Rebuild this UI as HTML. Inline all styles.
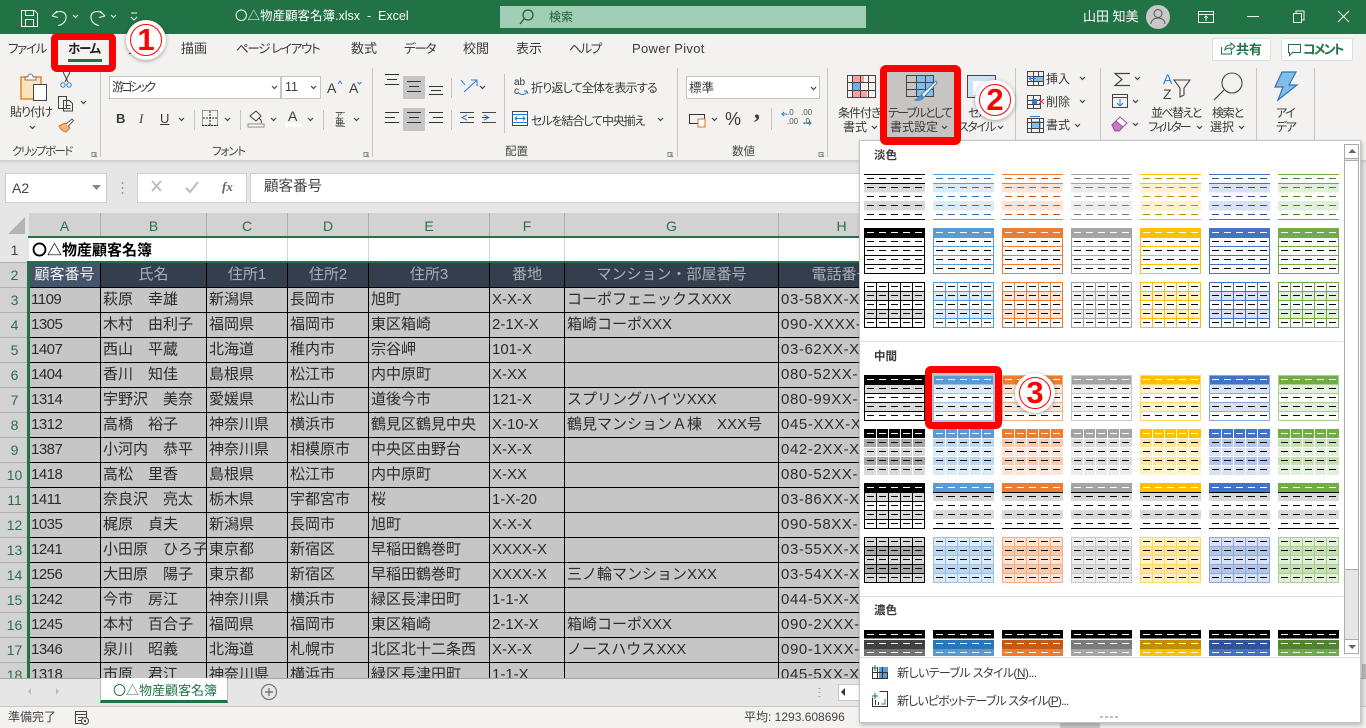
<!DOCTYPE html>
<html lang="ja"><head><meta charset="utf-8"><title>Excel</title>
<style>
html,body{margin:0;padding:0;width:1366px;height:728px;overflow:hidden;background:#e6e6e6}
body{position:relative;font-family:"Liberation Sans","Noto Sans CJK JP",sans-serif;font-size:12px;color:#3b3a39;font-feature-settings:"palt"}
div,span{position:absolute;box-sizing:border-box}
.t{white-space:nowrap;line-height:16px}
u{text-decoration:underline}
.box{background:#fff;border:1px solid #c8c6c4}
svg{position:absolute;left:0;top:0;overflow:hidden}
.i{fill:none;stroke:#444;stroke-width:1;shape-rendering:crispEdges}
.r{fill:none;stroke:#444;stroke-width:1.2}
.lab{color:#484644;font-size:11.5px}
.tab{font-size:13px}
.kt{font-size:12.5px;letter-spacing:-1.3px}
#grid{left:0;top:213px;width:860px;height:465px;overflow:hidden}
table{border-collapse:separate;border-spacing:0;table-layout:fixed;width:905px;position:absolute;left:0;top:0;font-feature-settings:normal;font-size:15px}
td,th{box-sizing:border-box;height:25px;padding:0 0 0 2px;white-space:nowrap;overflow:hidden;font-weight:400;line-height:24px;color:#2b2b2b;background:#c6c6c6;border-right:1px solid #000;border-bottom:1px solid #000;text-align:left}
td.n{letter-spacing:-.5px;padding-left:2px}
tr:not(.b) td:nth-child(9){letter-spacing:.6px}
th{text-align:center;padding:0}
tr.h th{background:#d2d2d2;color:#2c6e4c;border-right:1px solid #aeaeae;border-bottom:0;font-size:14px;font-family:"Liberation Sans",sans-serif}
tr.h th.c{background:#e6e6e6;border-right:0}
th.rh{background:#d2d2d2;color:#2c6e4c;border-right:0;border-bottom:1px solid #aeaeae;font-size:14px;padding:0;font-family:"Liberation Sans",sans-serif}
th.w{background:#e6e6e6;color:#444}
tr.a td{background:#fff;border-right:1px solid #d4d4d4;border-bottom:0;font-weight:700;color:#000;overflow:visible}
tr.a td.f{border-right:0;padding-left:3px}
tr.b td{background:#333f4f;color:#aab0b8;text-align:center;padding:0}
tr.b td.on{background:#44546a;color:#f2f2f2}
.k{--c:#000;--h:#000;--l:#d9d9d9;--m:#a6a6a6;--t:#000;--dd:#404040;--dc:#737373}
.b{--c:#5b9bd5;--h:#2e75b6;--l:#ddebf7;--m:#bdd7ee;--t:#9bc2e6;--dd:#2e75b6;--dc:#5b9bd5}
.o{--c:#ed7d31;--h:#c65911;--l:#fce4d6;--m:#f8cbad;--t:#f4b084;--dd:#c65911;--dc:#ed7d31}
.g{--c:#a5a5a5;--h:#7b7b7b;--l:#ededed;--m:#dbdbdb;--t:#c9c9c9;--dd:#7b7b7b;--dc:#a5a5a5}
.y{--c:#ffc000;--h:#bf8f00;--l:#fff2cc;--m:#ffe699;--t:#ffd966;--dd:#bf8f00;--dc:#ffc000}
.n{--c:#4472c4;--h:#305496;--l:#d9e1f2;--m:#b4c6e7;--t:#8ea9db;--dd:#305496;--dc:#4472c4}
.e{--c:#70ad47;--h:#548235;--l:#e2efda;--m:#c6e0b4;--t:#a9d08e;--dd:#548235;--dc:#70ad47}
.fc{fill:var(--c)}.fl{fill:var(--l)}.fm{fill:var(--m)}.fd{fill:var(--dd)}.fe{fill:var(--dc)}
.sc{stroke:var(--c);fill:none}.st{stroke:var(--t);fill:none}.sh{stroke:var(--h)}
.red{border:7px solid #f00;border-radius:6px}
.num{width:40px;height:40px;border-radius:50%;background:#fff;box-shadow:0 1px 4px rgba(0,0,0,.35)}
.num i{position:absolute;left:4px;top:4px;width:32px;height:32px;border:1.5px solid #f00;border-radius:50%;box-sizing:border-box}
.num b{position:absolute;left:0;top:0;width:40px;text-align:center;line-height:40px;font-size:31px;color:#f00;font-family:"Liberation Sans",sans-serif}
</style></head><body>

<!-- title bar -->
<div style="left:0;top:0;width:1366px;height:34px;background:#217346"></div>
<div style="left:500px;top:6px;width:366px;height:22px;background:#a0cdb3"></div>
<span class="t" style="left:549px;top:9px;color:#1d5f3b;font-size:12px">検索</span>
<span class="t" style="left:235px;top:8px;color:#fff;font-size:12.5px;font-feature-settings:normal">〇△物産顧客名簿.xlsx &nbsp;- &nbsp;Excel</span>
<span class="t" style="left:1083px;top:9px;color:#fff;font-size:13px">山田 知美</span>
<svg width="1366" height="34" viewBox="0 0 1366 34">
<g fill="none" stroke="#eef5f1" stroke-width="1.1">
<path d="M21.5 10.5h13l3 3v13h-16zM25.5 10.5v5h8v-5M25.5 26.5v-7h8v7" shape-rendering="crispEdges"/>
<path d="M52 16l5-5M52 16l6 1.5M52.5 15.5C58 9 67 11 66 18c-.5 4-4 7-8 7.5"/>
<path d="M105 16l-5-5M105 16l-6 1.5M104.5 15.5C99 9 90 11 91 18c.5 4 4 7 8 7.5"/>
<path d="M73 15l2.500 2.500L78 15M111 15l2.500 2.500L116 15M131 13h6M131 17l3 3 3-3"/>
<path d="M1198.500 11.500h15v11h-15zM1198.500 14.500h15M1206 21v-4M1204 18l2-2 2 2" shape-rendering="crispEdges"/>
<path d="M1247 16.500h12M1293.500 13.500h8v9h-8zM1296 13.500v-2.500h8v9h-2.500" shape-rendering="crispEdges"/>
<path d="M1338 11l11 11M1349 11l-11 11"/>
</g>
<circle cx="528" cy="15" r="5" fill="none" stroke="#1d5f3b" stroke-width="1.2"/><path d="M524 19l-4 5" stroke="#1d5f3b" stroke-width="1.2"/>
<circle cx="1158" cy="17" r="12" fill="#c8c8c8"/><circle cx="1158" cy="13.500" r="4" fill="none" stroke="#555"/><path d="M1151 24c0-8 14-8 14 0" fill="none" stroke="#555"/>
</svg>

<!-- ribbon -->
<div style="left:0;top:34px;width:1366px;height:126px;background:#f3f2f1"></div>
<div style="left:0;top:160px;width:1366px;height:4px;background:linear-gradient(#cfcfcf,#e6e6e6)"></div>
<span class="t tab kt" style="left:8px;top:41px">ファイル</span>
<span class="t tab kt" style="left:68px;top:41px;font-weight:700;color:#222">ホーム</span>
<div style="left:68px;top:59px;width:34px;height:3px;background:#217346"></div>
<span class="t tab" style="left:128px;top:41px">挿入</span>
<span class="t tab" style="left:181px;top:41px">描画</span>
<span class="t tab kt" style="left:236px;top:41px">ページ レイアウト</span>
<span class="t tab" style="left:351px;top:41px">数式</span>
<span class="t tab kt" style="left:404px;top:41px">データ</span>
<span class="t tab" style="left:463px;top:41px">校閲</span>
<span class="t tab" style="left:516px;top:41px">表示</span>
<span class="t tab kt" style="left:569px;top:41px">ヘルプ</span>
<span class="t tab" style="left:632px;top:41px;letter-spacing:.3px">Power Pivot</span>
<div style="left:1212px;top:38px;width:59px;height:23px;background:#fff;border:1px solid #e1dfdd;border-radius:2px"></div>
<span class="t" style="left:1236px;top:42px;font-size:13px;font-weight:700;color:#217346">共有</span>
<div style="left:1281px;top:38px;width:72px;height:23px;background:#fff;border:1px solid #e1dfdd;border-radius:2px"></div>
<span class="t" style="left:1303px;top:42px;font-size:13px;font-weight:700;color:#217346;letter-spacing:-1.9px">コメント</span>

<!-- ribbon boxes -->
<div class="box" style="left:109px;top:76px;width:172px;height:23px"></div>
<div class="box" style="left:281px;top:76px;width:40px;height:23px"></div>
<div class="box" style="left:686px;top:76px;width:134px;height:23px"></div>
<div style="left:403px;top:76px;width:22px;height:23px;background:#c6c6c6"></div>
<div style="left:403px;top:108px;width:22px;height:23px;background:#c6c6c6"></div>

<svg width="1366" height="160" viewBox="0 0 1366 160">
<!-- separators -->
<path d="M100.500 68v89M372.500 68v89M677.500 68v89M827.500 68v89M1015.500 68v89M1100.500 68v89M1256.500 68v89M1314.500 68v89M194.500 110v20M240.500 110v20M323.500 110v20M504.500 74v59M771.500 108v22M451.500 78v20M451.500 110v20" stroke="#c8c6c4" fill="none" shape-rendering="crispEdges"/>
<!-- share / comment -->
<path d="M1221.500 47v7h10v-3M1225 50c0-4 3-5 6-5v-2l4 3.500-4 3.500v-2c-3 0-5 1-6 2z" fill="none" stroke="#217346"/>
<path d="M1288.500 44.500h12v8h-8l-3 3v-3h-1z" fill="none" stroke="#217346"/>
<!-- clipboard -->
<rect x="21" y="77" width="20" height="22" fill="#fbe3c0" stroke="#e08a1e" stroke-width="1.500"/>
<path d="M25 80v-3h3c0-4 5-4 5 0h3v3z" fill="#fff" stroke="#777"/>
<rect x="33.500" y="84.500" width="13" height="16" fill="#fff" stroke="#444"/>
<path d="M63 72l5 10M70 72l-5 10" stroke="#444" fill="none"/>
<circle cx="63" cy="85" r="2.200" fill="none" stroke="#2b7cd3"/><circle cx="69" cy="85" r="2.200" fill="none" stroke="#2b7cd3"/>
<path class="i" d="M58.500 96.500h8v12h-8zM63.500 100.500h6l3 3v7.500h-9zM65.500 105.500h5M65.500 108.500h5"/>
<path d="M59 126l6-3 5 5-4 4c-2 0-6-3-7-6z" fill="#f4b183" stroke="#d9761e"/><path d="M66 124l6-5 1.500 1.500-5.500 6" fill="#fff" stroke="#555"/>
<!-- chevrons -->
<path class="r" d="M81 101l2.500 2.500 2.500-2.500M30 126l2.500 2.500 2.500-2.500M272 86l2.500 2.500 2.500-2.500M311 86l2.500 2.500 2.500-2.500M179 118l2.500 2.500 2.500-2.500M225 118l2.500 2.500 2.500-2.500M271 118l2.500 2.500 2.500-2.500M308 118l2.500 2.500 2.500-2.500M354 118l2.500 2.500 2.500-2.500M480 86l2.500 2.500 2.500-2.500M658 118l2.500 2.500 2.500-2.500M811 87l2.500 2.500 2.500-2.500M712 118l2.500 2.500 2.500-2.500M1080 77l2.500 2.500 2.500-2.500M1080 100l2.500 2.500 2.500-2.500M1075 124l2.500 2.500 2.500-2.500M1135 77l2.500 2.500 2.500-2.500M1133 100l2.500 2.500 2.500-2.500M1133 123l2.500 2.500 2.500-2.500M872 126l2.500 2.500 2.500-2.500M998 126l2.500 2.500 2.500-2.500M1197 126l2.500 2.500 2.500-2.500M1239 126l2.500 2.500 2.500-2.500"/>
<!-- font row -->
<path d="M338 84l2-3 2 3" stroke="#2b7cd3" fill="none"/>
<path d="M357.500 82l2 2 2-2" stroke="#2b7cd3" fill="none"/>
<path class="i" d="M202.500 110.500h15v15h-15z" stroke-dasharray="1 1"/><path class="i" d="M202 125.500h16M210 111v14M203 118h14" style="stroke:#222" stroke-dasharray="2 1"/>
<path d="M250 116l6-5 5 5-5 5zM259 118c2 2 3 3 2 5" fill="none" stroke="#444"/><rect x="248" y="124" width="16" height="3" fill="#fff" stroke="#888"/>
<rect x="285" y="123" width="16" height="4" fill="#fff"/>
<path class="i" d="M336 123.500h9M336 126.500h9M336 112.500h9" style="stroke:#888"/>
<!-- align -->
<path class="i" d="M385 74.500h14M387 79.500h10M385 84.500h14M407 81.500h14M409 86.500h10M407 91.500h14M429 86.500h14M431 90.500h10M429 94.500h14M385 112.500h14M385 117.500h10M385 122.500h14M407 112.500h14M409 117.500h10M407 122.500h14M429 112.500h14M433 117.500h10M429 122.500h14" style="stroke:#333"/>
<path d="M461 80l4 5M471 80l6 0 0 6M464 92l13-12" fill="none" stroke="#2b7cd3"/>
<path class="i" d="M460 112.500h14M468 117.500h6M460 122.500h14M482 112.500h14M482 117.500h6M482 122.500h14"/>
<path d="M467 115l-5 2.500 5 2.500M484 115l5 2.500-5 2.500" fill="none" stroke="#2b7cd3"/>
<path d="M518 92c3 4 8 3 9-1M527 91l-3 0M527 91l1 3" fill="none" stroke="#2b7cd3"/>
<rect x="512.500" y="111.500" width="15" height="14" fill="#fff" stroke="#444"/><path d="M512 114.500h16M512 122.500h16" stroke="#2b7cd3" fill="none"/><path d="M515 118.500h10M517 116.500l-2 2 2 2M523 116.500l2 2-2 2" stroke="#2b7cd3" fill="none"/>
<!-- number -->
<rect x="689.500" y="114.500" width="15" height="9" fill="none" stroke="#333"/><rect x="698" y="119" width="7" height="8" fill="#fff" stroke="#e2711d"/>
<path d="M782 114h5M784 112l-2 2 2 2M803 123h8M809 121l2 2-2 2" fill="none" stroke="#2b7cd3"/>
<!-- conditional -->
<rect x="852" y="75" width="12" height="7" fill="#f6a0a4"/><rect x="852" y="90" width="15" height="7" fill="#f6a0a4"/><rect x="852" y="82" width="8" height="8" fill="#6fb0e6"/>
<path class="i" d="M847.500 75.500h28v22h-28zM847.500 82.500h28M847.500 90.500h28M852.500 75v22M860.500 75v22M868.500 75v22"/>
</svg>

<!-- ribbon text -->
<span class="t" style="left:10px;top:104px;letter-spacing:-1px">貼り付け</span>
<span class="t lab" style="left:12px;top:144px;letter-spacing:-1.6px">クリップボード</span>
<span class="t" style="left:112px;top:79px;letter-spacing:-2.6px">游ゴシック</span>
<span class="t" style="left:285px;top:79px;font-size:12.5px">11</span>
<span class="t" style="left:327px;top:80px;font-size:14px">A</span><span class="t" style="left:349px;top:80px;font-size:14px">A</span>
<span class="t" style="left:116px;top:111px;font-weight:700;font-size:13px;font-family:'Liberation Sans',sans-serif">B</span>
<span class="t" style="left:139px;top:111px;font-style:italic;font-size:13px;font-family:'Liberation Serif',serif">I</span>
<span class="t" style="left:160px;top:111px;text-decoration:underline;font-size:13px">U</span>
<span class="t" style="left:288px;top:108px;font-size:14px">A</span>
<span class="t" style="left:335px;top:108px;font-size:8px">ア</span><span class="t" style="left:335px;top:114px;font-size:9px">亜</span>
<span class="t lab" style="left:212px;top:144px;letter-spacing:-1.2px">フォント</span>
<span class="t" style="left:514px;top:78px;font-size:10px;line-height:10px">ab</span>
<span class="t" style="left:514px;top:87px;font-size:10px;line-height:10px">c</span>
<span class="t" style="left:531px;top:80px;letter-spacing:-.8px">折り返して全体を表示する</span>
<span class="t" style="left:531px;top:113px;letter-spacing:-1.1px">セルを結合して中央揃え</span>
<span class="t lab" style="left:505px;top:144px">配置</span>
<span class="t" style="left:689px;top:80px;font-size:12.5px">標準</span>
<span class="t" style="left:725px;top:111px;font-size:18px">%</span>
<span class="t" style="left:754px;top:103px;font-size:24px;font-weight:700;font-family:'Liberation Serif',serif">,</span>
<span class="t" style="left:787px;top:108px;font-size:8px;line-height:9px;color:#555">.0<br>.00</span>
<span class="t" style="left:801px;top:108px;font-size:8px;line-height:9px;color:#555">.00<br>&nbsp;.0</span>
<span class="t lab" style="left:732px;top:144px">数値</span>
<span class="t" style="left:838px;top:105px;letter-spacing:-1px">条件付き</span>
<span class="t" style="left:843px;top:119px">書式</span>
<span class="t" style="left:968px;top:105px;letter-spacing:-1px">セル</span>
<span class="t" style="left:958px;top:119px;letter-spacing:-1.6px">スタイル</span>
<span class="t" style="left:1046px;top:71px">挿入</span>
<span class="t" style="left:1046px;top:94px">削除</span>
<span class="t" style="left:1046px;top:117px">書式</span>
<span class="t" style="left:1151px;top:105px;letter-spacing:-1.6px">並べ替えと</span>
<span class="t" style="left:1148px;top:119px;letter-spacing:-2.3px">フィルター</span>
<span class="t" style="left:1212px;top:105px;letter-spacing:-1.2px">検索と</span>
<span class="t" style="left:1210px;top:119px">選択</span>
<span class="t" style="left:1276px;top:105px;letter-spacing:-1.5px">アイ</span>
<span class="t" style="left:1276px;top:119px;letter-spacing:-1.5px">デア</span>

<!-- formula bar -->
<div class="box" style="left:5px;top:173px;width:102px;height:30px;border-color:#d0d0d0"></div>
<span class="t" style="left:12px;top:180px;font-size:14px;color:#444">A2</span>
<div class="box" style="left:137px;top:173px;width:110px;height:30px;border-color:#d0d0d0"></div>
<div class="box" style="left:250px;top:173px;width:620px;height:30px;border-color:#d0d0d0"></div>
<span class="t" style="left:264px;top:179px;font-size:14.500px;color:#444;font-feature-settings:normal">顧客番号</span>
<span class="t" style="left:222px;top:179px;font-size:13px;font-style:italic;font-weight:700;color:#666;font-family:'Liberation Serif',serif">fx</span>

<!-- grid -->
<div id="grid">
<table>
<colgroup><col style="width:29px"><col style="width:72px"><col style="width:106px"><col style="width:81px"><col style="width:81px"><col style="width:121px"><col style="width:75px"><col style="width:214px"><col style="width:126px"></colgroup>
<tr class="h"><th class="c"></th><th>A</th><th>B</th><th>C</th><th>D</th><th>E</th><th>F</th><th>G</th><th>H</th></tr>
<tr class="a"><th class="rh w">1</th><td class="f">〇△物産顧客名簿</td><td></td><td></td><td></td><td></td><td></td><td></td><td></td></tr>
<tr class="b"><th class="rh">2</th><td class="on">顧客番号</td><td>氏名</td><td>住所1</td><td>住所2</td><td>住所3</td><td>番地</td><td>マンション・部屋番号</td><td>電話番号</td></tr>
<tr><th class="rh">3</th><td class="n">1109</td><td>萩原　幸雄</td><td>新潟県</td><td>長岡市</td><td>旭町</td><td>X-X-X</td><td>コーポフェニックスXXX</td><td>03-58XX-XXXX</td></tr>
<tr><th class="rh">4</th><td class="n">1305</td><td>木村　由利子</td><td>福岡県</td><td>福岡市</td><td>東区箱崎</td><td>2-1X-X</td><td>箱崎コーポXXX</td><td>090-XXXX-XXXX</td></tr>
<tr><th class="rh">5</th><td class="n">1407</td><td>西山　平蔵</td><td>北海道</td><td>稚内市</td><td>宗谷岬</td><td>101-X</td><td></td><td>03-62XX-XXXX</td></tr>
<tr><th class="rh">6</th><td class="n">1404</td><td>香川　知佳</td><td>島根県</td><td>松江市</td><td>内中原町</td><td>X-XX</td><td></td><td>080-52XX-XXXX</td></tr>
<tr><th class="rh">7</th><td class="n">1314</td><td>宇野沢　美奈</td><td>愛媛県</td><td>松山市</td><td>道後今市</td><td>121-X</td><td>スプリングハイツXXX</td><td>080-99XX-XXXX</td></tr>
<tr><th class="rh">8</th><td class="n">1312</td><td>高橋　裕子</td><td>神奈川県</td><td>横浜市</td><td>鶴見区鶴見中央</td><td>X-10-X</td><td>鶴見マンションＡ棟　XXX号</td><td>045-XXX-XXXX</td></tr>
<tr><th class="rh">9</th><td class="n">1387</td><td>小河内　恭平</td><td>神奈川県</td><td>相模原市</td><td>中央区由野台</td><td>X-X-X</td><td></td><td>042-2XX-XXXX</td></tr>
<tr><th class="rh">10</th><td class="n">1418</td><td>高松　里香</td><td>島根県</td><td>松江市</td><td>内中原町</td><td>X-XX</td><td></td><td>080-52XX-XXXX</td></tr>
<tr><th class="rh">11</th><td class="n">1411</td><td>奈良沢　亮太</td><td>栃木県</td><td>宇都宮市</td><td>桜</td><td>1-X-20</td><td></td><td>03-86XX-XXXX</td></tr>
<tr><th class="rh">12</th><td class="n">1035</td><td>梶原　貞夫</td><td>新潟県</td><td>長岡市</td><td>旭町</td><td>X-X-X</td><td></td><td>090-58XX-XXXX</td></tr>
<tr><th class="rh">13</th><td class="n">1241</td><td>小田原　ひろ子</td><td>東京都</td><td>新宿区</td><td>早稲田鶴巻町</td><td>XXXX-X</td><td></td><td>03-55XX-XXXX</td></tr>
<tr><th class="rh">14</th><td class="n">1256</td><td>大田原　陽子</td><td>東京都</td><td>新宿区</td><td>早稲田鶴巻町</td><td>XXXX-X</td><td>三ノ輪マンションXXX</td><td>03-54XX-XXXX</td></tr>
<tr><th class="rh">15</th><td class="n">1242</td><td>今市　房江</td><td>神奈川県</td><td>横浜市</td><td>緑区長津田町</td><td>1-1-X</td><td></td><td>044-5XX-XXXX</td></tr>
<tr><th class="rh">16</th><td class="n">1245</td><td>本村　百合子</td><td>福岡県</td><td>福岡市</td><td>東区箱崎</td><td>2-1X-X</td><td>箱崎コーポXXX</td><td>090-2XXX-XXXX</td></tr>
<tr><th class="rh">17</th><td class="n">1346</td><td>泉川　昭義</td><td>北海道</td><td>札幌市</td><td>北区北十二条西</td><td>X-X-X</td><td>ノースハウスXXX</td><td>090-1XXX-XXXX</td></tr>
<tr><th class="rh">18</th><td class="n">1318</td><td>市原　君江</td><td>神奈川県</td><td>横浜市</td><td>緑区長津田町</td><td>1-1-X</td><td></td><td>045-5XX-XXXX</td></tr>
</table>
<div style="left:28px;top:23px;width:832px;height:2px;background:#217346"></div>
<div style="left:27px;top:48px;width:833px;height:2px;background:#217346"></div>
<div style="left:27px;top:48px;width:3px;height:417px;background:#217346"></div>
</div>

<!-- tab bar -->
<div style="left:0;top:678px;width:1366px;height:28px;background:#e6e6e6;border-top:1px solid #a6a6a6"></div>
<div style="left:100px;top:678px;width:128px;height:25px;background:#fff;border-left:1px solid #bbb;border-right:1px solid #bbb;border-bottom:3px solid #217346"></div>
<span class="t" style="left:113px;top:683px;font-size:13px;color:#217346;font-feature-settings:normal">〇△物産顧客名簿</span>
<div style="left:838px;top:684px;width:22px;height:17px;background:#fff;border:1px solid #c8c8c8"></div>
<div style="left:0;top:706px;width:1366px;height:22px;background:#f3f2f1;border-top:1px solid #c8c8c8"></div>
<span class="t" style="left:8px;top:709px;color:#444;font-feature-settings:normal">準備完了</span>
<span class="t" style="left:744px;top:709px;color:#444;font-feature-settings:normal">平均: 1293.608696</span>
<div style="left:1060px;top:723px;width:40px;height:5px;background:#c8c8c8"></div>
<div style="left:1362px;top:664px;width:4px;height:14px;background:#b8b8b8"></div>

<!-- low chrome icons -->
<svg width="1366" height="728" viewBox="0 0 1366 728">
<path d="M92 152.500h4v4h-4zM94 154l3 3M364 152.500h4v4h-4zM366 154l3 3M668 152.500h4v4h-4zM670 154l3 3M819 152.500h4v4h-4zM821 154l3 3" fill="none" stroke="#888"/>
<path d="M92 185h9l-4.500 5z" fill="#888"/>
<path d="M122.500 182v2M122.500 187v2M122.500 192v2" stroke="#999" stroke-width="1.500"/>
<path d="M152 181l9 10M161 181l-9 10" stroke="#bbb" stroke-width="1.800" fill="none"/>
<path d="M186 188l4 4 8-10" stroke="#bbb" stroke-width="2" fill="none"/>
<path d="M8 234h17v-17z" fill="#b4b4b4"/>
<path d="M31 688l-3 3.500 3 3.500zM56 688l3 3.500-3 3.500z" fill="#bbb"/>
<circle cx="269" cy="692" r="7.500" fill="none" stroke="#777" stroke-width="1.200"/><path d="M265 692h8M269 688v8" stroke="#777" stroke-width="1.400"/>
<path d="M845 688v8l-4-4z" fill="#333"/>
<path d="M819.500 688v1M819.500 692v1M819.500 696v1" stroke="#aaa" stroke-width="2"/>
<path class="i" d="M75.500 711.500h11v12h-11zM75.500 714.500h11M78 717.500h5M78 720.500h3"/><circle cx="85" cy="721" r="3.500" fill="#f3f2f1" stroke="#444"/><circle cx="85" cy="721" r="1.200" fill="#444"/>
</svg>

<!-- panel -->
<div style="left:859px;top:140px;width:502px;height:583px;background:#fff;border:1px solid #c6c6c6;box-shadow:1px 2px 4px rgba(0,0,0,.25)"></div>
<span class="t" style="left:874px;top:148px;font-weight:700;font-size:11.500px;font-feature-settings:normal">淡色</span>
<span class="t" style="left:874px;top:349px;font-weight:700;font-size:11.500px;font-feature-settings:normal">中間</span>
<span class="t" style="left:874px;top:603px;font-weight:700;font-size:11.500px;font-feature-settings:normal">濃色</span>
<div style="left:860px;top:341px;width:483px;height:1px;background:#e1e1e1"></div>
<div style="left:860px;top:596px;width:483px;height:1px;background:#e1e1e1"></div>
<div style="left:1344px;top:144px;width:15px;height:510px;background:#e6e6e6;border:1px solid #b0b0b0"></div>
<div style="left:1344px;top:160px;width:15px;height:410px;background:#fff;border:1px solid #ababab"></div>
<div style="left:1344px;top:144px;width:15px;height:15px;background:#fff;border:1px solid #ababab"></div>
<div style="left:1344px;top:639px;width:15px;height:15px;background:#fff;border:1px solid #ababab"></div>
<div style="left:932px;top:373px;width:63px;height:49px;background:#c6c6c6"></div>

<svg width="1366" height="656" viewBox="0 0 1366 656" shape-rendering="crispEdges">
<defs>
<path id="r" d="M3 .5h7m5 0h7m5 0h7m5 0h7m5 0h7" fill="none"/>
<g id="hw" stroke="#fff"><use href="#r" y="4"/></g>
<g id="rb" stroke="#000"><use href="#r" y="13"/><use href="#r" y="22"/><use href="#r" y="31"/><use href="#r" y="40"/></g>
<path id="hl" d="M0 9.500h61M0 18.500h61M0 27.500h61M0 36.500h61"/>
<path id="vl" d="M12.500 0v46M24.500 0v46M36.500 0v46M48.500 0v46"/>
<g id="A"><rect class="fl" y="9" width="61" height="9.500"/><rect class="fl" y="27" width="61" height="9.500"/><path class="sc" d="M0 .5h61M0 9.500h61M0 45.500h61"/><g class="sh"><use href="#r" y="4"/><use href="#r" y="13"/><use href="#r" y="22"/><use href="#r" y="31"/><use href="#r" y="40"/></g></g>
<g id="B"><rect class="fc" width="61" height="9"/><use href="#hl" class="sc"/><rect class="sc" x=".5" y=".5" width="60" height="45"/><use href="#hw"/><use href="#rb"/></g>
<g id="C"><rect class="fl" y="9" width="61" height="9"/><rect class="fl" y="27" width="61" height="9"/><use href="#hl" class="sc"/><use href="#vl" class="sc"/><rect class="sc" x=".5" y=".5" width="60" height="45"/><use href="#r" y="4" stroke="#000"/><use href="#rb"/></g>
<g id="D"><rect width="61" height="46" fill="#fff"/><rect class="fc" width="61" height="9"/><rect class="fl" y="9" width="61" height="9"/><rect class="fl" y="27" width="61" height="9"/><use href="#hl" class="st"/><rect class="st" x=".5" y=".5" width="60" height="45"/><rect class="fc" x="1" y="1" width="59" height="8"/><use href="#hw"/><use href="#rb"/></g>
<g id="E"><rect class="fc" width="61" height="9"/><rect class="fm" y="9" width="61" height="9"/><rect class="fl" y="18" width="61" height="9"/><rect class="fm" y="27" width="61" height="9"/><rect class="fl" y="36" width="61" height="10"/><use href="#hl" stroke="#fff"/><use href="#vl" stroke="#fff"/><use href="#hw"/><use href="#rb"/></g>
<g id="F"><rect class="fc" width="61" height="9"/><rect y="9" width="61" height="9" fill="#d9d9d9"/><rect y="27" width="61" height="9" fill="#d9d9d9"/><path d="M0 9.500h61M0 45.500h61" stroke="#000"/><use href="#hw"/><use href="#rb"/></g>
<g id="F0"><rect class="fc" width="61" height="9"/><rect y="9" width="61" height="9" fill="#d9d9d9"/><rect y="27" width="61" height="9" fill="#d9d9d9"/><use href="#hl" stroke="#000"/><use href="#vl" stroke="#000"/><rect x=".5" y=".5" width="60" height="45" fill="none" stroke="#000"/><use href="#hw"/><use href="#rb"/></g>
<g id="G"><rect class="fl" width="61" height="9"/><rect class="fm" y="9" width="61" height="9"/><rect class="fl" y="18" width="61" height="9"/><rect class="fm" y="27" width="61" height="9"/><rect class="fl" y="36" width="61" height="10"/><use href="#hl" class="st"/><use href="#vl" class="st"/><rect class="st" x=".5" y=".5" width="60" height="45"/><use href="#r" y="4" stroke="#000"/><use href="#rb"/></g>
<g id="H"><rect width="61" height="8.500" fill="#000"/><rect class="fd" y="10" width="61" height="9"/><rect class="fe" y="19" width="61" height="8"/><g stroke="#fff"><use href="#r" y="4"/><use href="#r" y="13"/><use href="#r" y="22"/></g></g>
</defs>
<g transform="translate(0,174)"><use href="#A" x="864" class="k"/><use href="#A" x="933" class="b"/><use href="#A" x="1002" class="o"/><use href="#A" x="1071" class="g"/><use href="#A" x="1140" class="y"/><use href="#A" x="1209" class="n"/><use href="#A" x="1278" class="e"/></g>
<g transform="translate(0,228)"><use href="#B" x="864" class="k"/><use href="#B" x="933" class="b"/><use href="#B" x="1002" class="o"/><use href="#B" x="1071" class="g"/><use href="#B" x="1140" class="y"/><use href="#B" x="1209" class="n"/><use href="#B" x="1278" class="e"/></g>
<g transform="translate(0,282)"><use href="#C" x="864" class="k"/><use href="#C" x="933" class="b"/><use href="#C" x="1002" class="o"/><use href="#C" x="1071" class="g"/><use href="#C" x="1140" class="y"/><use href="#C" x="1209" class="n"/><use href="#C" x="1278" class="e"/></g>
<g transform="translate(0,375)"><use href="#D" x="864" class="k"/><use href="#D" x="933" class="b"/><use href="#D" x="1002" class="o"/><use href="#D" x="1071" class="g"/><use href="#D" x="1140" class="y"/><use href="#D" x="1209" class="n"/><use href="#D" x="1278" class="e"/></g>
<g transform="translate(0,429)"><use href="#E" x="864" class="k"/><use href="#E" x="933" class="b"/><use href="#E" x="1002" class="o"/><use href="#E" x="1071" class="g"/><use href="#E" x="1140" class="y"/><use href="#E" x="1209" class="n"/><use href="#E" x="1278" class="e"/></g>
<g transform="translate(0,483)"><use href="#F0" x="864" class="k"/><use href="#F" x="933" class="b"/><use href="#F" x="1002" class="o"/><use href="#F" x="1071" class="g"/><use href="#F" x="1140" class="y"/><use href="#F" x="1209" class="n"/><use href="#F" x="1278" class="e"/></g>
<g transform="translate(0,537)"><use href="#G" x="864" class="k"/><use href="#G" x="933" class="b"/><use href="#G" x="1002" class="o"/><use href="#G" x="1071" class="g"/><use href="#G" x="1140" class="y"/><use href="#G" x="1209" class="n"/><use href="#G" x="1278" class="e"/></g>
<g transform="translate(0,630)"><use href="#H" x="864" class="k"/><use href="#H" x="933" class="b"/><use href="#H" x="1002" class="o"/><use href="#H" x="1071" class="g"/><use href="#H" x="1140" class="y"/><use href="#H" x="1209" class="n"/><use href="#H" x="1278" class="e"/></g>
<path d="M1348 153l4-4 4 4zM1348 645l4 4 4-4z" fill="#666"/>
</svg>
<div style="left:860px;top:657px;width:500px;height:1px;background:#e1e1e1"></div>
<span class="t" style="left:897px;top:665px;letter-spacing:-.6px">新しいテーブル スタイル(<u>N</u>)...</span>
<span class="t" style="left:897px;top:693px;letter-spacing:-.9px">新しいピボットテーブル スタイル(<u>P</u>)...</span>
<svg width="1366" height="728" viewBox="0 0 1366 728">
<rect x="879" y="667" width="9" height="12" fill="#5b9bd5"/>
<path class="i" d="M872.500 672.500h15v6h-15zM877.500 667v12M882.500 667v12M872.500 667v12" style="stroke:#333"/>
<path d="M875 665v6M872 668h6" stroke="#217346" fill="none"/>
<path class="i" d="M872.500 697.500v9h15v-15h-8M875.500 700v5M878.500 702v3" style="stroke:#333"/>
<path d="M875 693v6M872 696h6" stroke="#217346" fill="none"/>
<path d="M881 704h4v-5" stroke="#2b7cd3" fill="none"/>
<path d="M1100 717h3M1105 717h3M1110 717h3M1115 717h3" stroke="#b8c0c8" stroke-width="2"/>
</svg>

<!-- red frames -->
<div class="red" style="left:51px;top:33px;width:65px;height:39px"></div>
<div class="red" style="left:880px;top:65px;width:81px;height:80px;border-bottom-width:8px;background:#c6c5c4"></div>
<span class="t" style="left:888px;top:105px;letter-spacing:-1.7px">テーブルとして</span>
<span class="t" style="left:890px;top:119px">書式設定</span>
<svg width="1366" height="160" viewBox="0 0 1366 160">
<path class="r" d="M942 126l2.500 2.500 2.500-2.500"/>
<rect x="916" y="75" width="18" height="21" fill="#83bdec"/>
<path class="i" d="M906.500 75.500h27v21h-27zM906.500 82.500h27M906.500 89.500h27M916.500 75v22M925.500 75v22"/>
<path d="M936 81l-14 13c-2 2-4 5-7 6 3 1 8 0 9-3l13-14z" fill="#fff" stroke="#4a7fb0"/><path d="M922 94c-2 2-4 5-7 6 3 1 8 0 9-3z" fill="#4a90d0"/>
<rect x="967.500" y="75.500" width="28" height="22" fill="#cfe3f6" stroke="#444"/><rect x="973" y="81" width="20" height="14" fill="#fff"/>
<path class="i" d="M1027.500 71.500h16v14h-16zM1027.500 76.500h16M1027.500 81.500h16M1033.500 71v14M1038.500 71v14"/><rect x="1034" y="77" width="9" height="4" fill="#83bdec"/><path d="M1036 78.500h-7M1032 76l-3 2.500 3 2.500" stroke="#2b7cd3" fill="none"/>
<path class="i" d="M1027.500 95.500h13v13h-13zM1027.500 100.500h13M1027.500 104.500h13M1033.500 95v14"/><rect x="1032" y="99" width="5" height="5" fill="#2b7cd3"/><path d="M1039 99l5 5M1044 99l-5 5" stroke="#d83b3b" fill="none"/>
<rect x="1031" y="121" width="10" height="8" fill="#83bdec"/><path class="i" d="M1027.500 118.500h16v14h-16zM1027.500 122.500h16M1027.500 128.500h16M1031.500 118v14M1039.500 118v14"/><path d="M1030 116.500h10" stroke="#2b7cd3" fill="none"/>
<path d="M1130 73.500h-15l7 6-7 6h15" fill="none" stroke="#444" stroke-width="1.200"/>
<path class="i" d="M1112.500 94.500h15v13h-15zM1112.500 97.500h15"/><path d="M1120 99v7M1117 103l3 3 3-3" stroke="#2b7cd3" fill="none"/>
<path d="M1112 125l8-8 7 6-8 8h-4z" fill="#fff" stroke="#a349a4"/><path d="M1112 125l4-4 7 6-4 4h-4z" fill="#c879c8" stroke="#a349a4"/>
<path d="M1174 80h16l-6 8v7l-4 2v-9z" fill="none" stroke="#444" stroke-width="1.100"/>
<circle cx="1232" cy="83" r="10" fill="none" stroke="#444" stroke-width="1.100"/><path d="M1224 90l-10 10" stroke="#444" stroke-width="1.200"/>
<path d="M1282 72h14l-7 13h8l-19 15 5-13h-8z" fill="#83bdec" stroke="#2e75b6" stroke-width="1.200"/>
</svg>
<span class="t" style="left:1163px;top:71px;font-size:14px;color:#2b7cd3;font-family:'Liberation Sans',sans-serif">A</span>
<span class="t" style="left:1163px;top:86px;font-size:14px;color:#444;font-family:'Liberation Sans',sans-serif">Z</span>
<div class="red" style="left:925px;top:366px;width:77px;height:63px"></div>

<!-- numbered circles -->
<div class="num" style="left:126px;top:20px"><i></i><b>1</b></div>
<div class="num" style="left:975px;top:80px"><i></i><b>2</b></div>
<div class="num" style="left:1015px;top:373px"><i></i><b>3</b></div>
</body></html>
